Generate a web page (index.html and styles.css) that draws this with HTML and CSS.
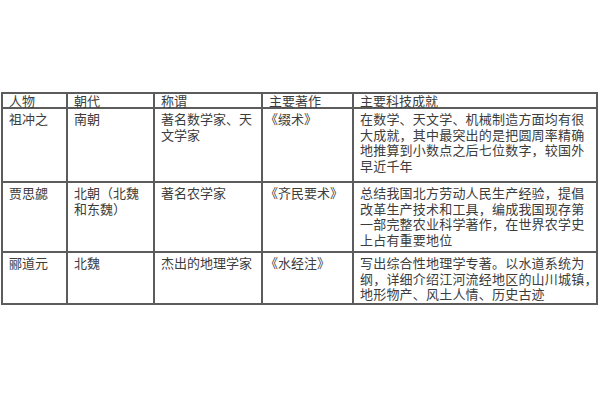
FILE: index.html
```html
<!DOCTYPE html>
<html lang="zh">
<head>
<meta charset="utf-8">
<link rel="stylesheet" href="styles.css">
</head>
<body>
<div class="page">
<table class="grid">
  <colgroup>
    <col class="c1"><col class="c2"><col class="c3"><col class="c4"><col class="c5">
  </colgroup>
  <tr class="head">
    <td>人物</td><td>朝代</td><td>称谓</td><td>主要著作</td><td>主要科技成就</td>
  </tr>
  <tr class="r1">
    <td>祖冲之</td>
    <td>南朝</td>
    <td>著名数学家、天<br>文学家</td>
    <td class="book">《缀术》</td>
    <td class="long">在数学、天文学、机械制造方面均有很<br>大成就，其中最突出的是把圆周率精确<br>地推算到小数点之后七位数字，较国外<br>早近千年</td>
  </tr>
  <tr class="r2">
    <td>贾思勰</td>
    <td>北朝（北魏<br>和东魏）</td>
    <td>著名农学家</td>
    <td class="book">《齐民要术》</td>
    <td class="long">总结我国北方劳动人民生产经验，提倡<br>改革生产技术和工具，编成我国现存第<br>一部完整农业科学著作，在世界农学史<br>上占有重要地位</td>
  </tr>
  <tr class="r3">
    <td>郦道元</td>
    <td>北魏</td>
    <td>杰出的地理学家</td>
    <td class="book">《水经注》</td>
    <td class="long">写出综合性地理学专著。以水道系统为<br>纲，详细介绍江河流经地区的山川城镇，<br>地形物产、风土人情、历史古迹</td>
  </tr>
</table>
</div>
</body>
</html>
```

FILE: styles.css
```css
html, body {
  margin: 0;
  padding: 0;
  background: #ffffff;
}
.page {
  width: 600px;
  height: 400px;
  padding: 92px 0 0 1px;
  box-sizing: border-box;
}
.grid {
  border-collapse: collapse;
  table-layout: fixed;
  width: 597px;
  font-family: "Noto Sans CJK SC", "Noto Sans", sans-serif;
  font-size: 13px;
  line-height: 15.5px;
  color: #3c3c3c;
}
.c1 { width: 65px; }
.c2 { width: 87px; }
.c3 { width: 108px; }
.c4 { width: 91px; }
.c5 { width: 244px; }
.grid td {
  border: 2px solid #5c5c5c;
  vertical-align: top;
  padding: 2px 0 0 6px;
  white-space: nowrap;
  overflow: visible;
}
.grid .head td {
  padding-top: 0;
  line-height: 13px;
}
.grid .book {
  padding-left: 2px;
}
.grid .long {
  letter-spacing: 0.2px;
}
.head { height: 15px; }
.r1 { height: 74px; }
.r2 { height: 70px; }
.r3 { height: 52px; }
```
